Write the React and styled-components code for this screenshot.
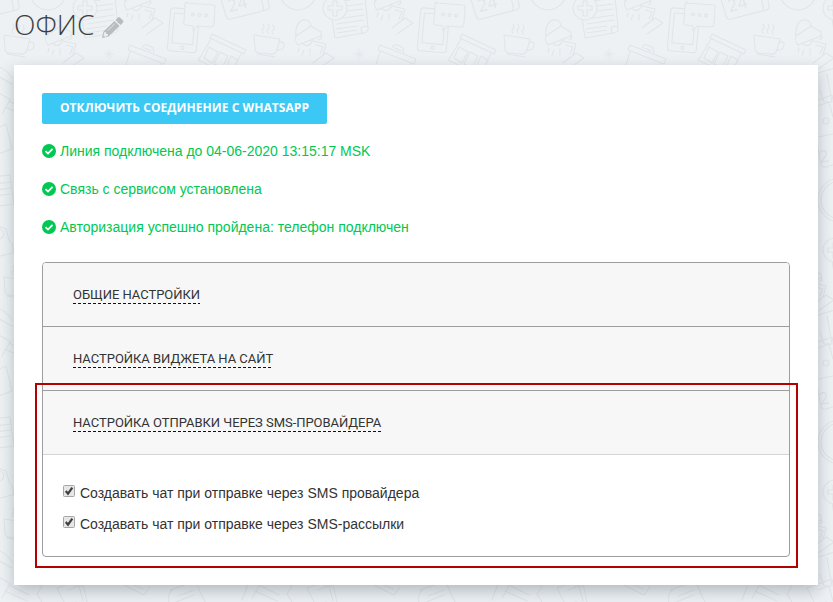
import React from "react";
import styled, { createGlobalStyle } from "styled-components";

const GlobalStyle = createGlobalStyle`
  * { box-sizing: border-box; }
  body { margin: 0; background: #edf1f4; overflow: hidden; }
`;

const Page = styled.div`
  position: relative;
  width: 833px;
  height: 602px;
  overflow: hidden;
  padding: 0 15px 0 14px;
  font-family: "Liberation Sans", Arial, sans-serif;
`;

const Backdrop = styled.svg`
  position: absolute;
  inset: 0;
  width: 100%;
  height: 100%;
`;

const Header = styled.header`
  position: relative;
  display: flex;
  align-items: flex-start;
  height: 65px;
  padding-top: 4px;
`;

const Title = styled.h1`
  margin: 0;
  font: 300 28px/40px "Open Sans", sans-serif;
  color: #3c3f42;
`;

const Pencil = styled.svg`
  width: 22px;
  height: 22px;
  margin: 12px 0 0 8px;
  fill: #b9bbbc;
`;

const Card = styled.main`
  position: relative;
  height: 520px;
  padding: 28px;
  background: #fff;
  box-shadow: 0 6px 14px rgba(60, 75, 85, 0.32);
`;

const Button = styled.button`
  display: block;
  width: 285px;
  height: 31px;
  padding: 0 0 2px;
  border: 0;
  border-radius: 2px;
  background: #3bc8f5;
  color: #fff;
  font: 700 12px/28px "Open Sans", sans-serif;
  letter-spacing: 0.06px;
  text-align: center;
  white-space: nowrap;
`;

const StatusList = styled.div`
  display: grid;
  grid-auto-rows: 38px;
  margin-top: 8px;
`;

const Status = styled.div`
  display: flex;
  align-items: center;
  gap: 4px;
  color: #00c853;
  font-size: 14px;
  white-space: nowrap;
`;

const StatusIcon = styled.svg`
  width: 14px;
  height: 14px;
  flex: none;
`;

const Accordion = styled.section`
  margin-top: 16px;
  height: 295px;
  border: 1px solid #9d9d9d;
  border-radius: 4px;
  overflow: hidden;
`;

const SectionHead = styled.div`
  display: flex;
  align-items: flex-start;
  height: 64px;
  padding: 24px 30px 0;
  background: #f7f7f7;
  border-bottom: 1px solid ${(p) => (p.$open ? "#d5d5d5" : "#9d9d9d")};
`;

const SectionLink = styled.span`
  display: block;
  height: 17px;
  font: 400 13px/16px Roboto, sans-serif;
  letter-spacing: -0.03px;
  color: #333;
  white-space: nowrap;
  background: repeating-linear-gradient(90deg, #111 0 3px, transparent 3px 5px) 0 100% / 100% 1px no-repeat;
`;

const Options = styled.div`
  display: grid;
  grid-auto-rows: 31px;
  padding: 22px 20px;
`;

const Option = styled.label`
  display: flex;
  align-items: center;
  gap: 5px;
  font-size: 14px;
  color: #333;
  white-space: nowrap;
`;

const CheckBox = styled.svg`
  width: 12px;
  height: 12px;
  margin-top: -4px;
  flex: none;
`;

const Highlight = styled.div`
  position: absolute;
  left: 21px;
  top: 318px;
  width: 763px;
  height: 185px;
  border: 2px solid #b30000;
`;

function Lamp() {
  return (
    <path d="M1 17C0 9 3 0 11 1c3 0 5 4 5 6l10 6v4L3 26C1 24 0 20 1 17l15-10M8 24c2 5 10 2 9-4M26 15l1 4-3 2M18 22l13 3-3 11M21 26l7 2-3 7M18 44l13-10 8 5-16 11M4 29l-1 4M9 31l-2 5M15 30v6" />
  );
}

function Doodles() {
  return (
    <Backdrop aria-hidden="true">
      <defs>
        <g id="doodle" fill="none" stroke="#e1e5e8" strokeWidth="1.1" strokeLinecap="round" strokeLinejoin="round">
          <g transform="rotate(5 186 30)">
            <rect x="169" y="9" width="29" height="43" rx="3" />
            <path d="M173 14h21v30h-21z" />
            <circle cx="184" cy="48" r="1.6" />
          </g>
          <path fill="#edf1f4" d="M187 3l26 2q3 0 2 4l-1 15q0 3-4 3l-13-1-4 5v-5l-7-1q-3 0-2-4l1-16q0-3 2-3z" />
          <circle cx="193" cy="14.500" r="1.400" />
          <circle cx="199.500" cy="15" r="1.400" />
          <circle cx="206" cy="15.500" r="1.400" />
          <path d="M220-4l6 20q1 4 5 3l35-9q4-1 3-5l-4-17M231 19l31-8q2-1 1-5l-3-13" />
          <path d="M4 35l26 4-3 11q-2 5-7 4l-11-1q-4 0-4-5zM29 42q6-1 5 4-1 5-8 4M7 54l18 3M13 33q-2-3 0-4t0-5M18 33q-2-3 0-4t0-5M23 34q-2-3 0-4t0-5" />
          <g transform="translate(45 19)"><Lamp /></g>
          <g transform="translate(124 -16)"><Lamp /></g>
          <path d="M95 1l20-4 3 30q1 6-5 6l-28 5-3-20M118 27q-4-2-7 1l1 6M97 6l16-2M97 11l16-2M87 19l27-4M87 24l27-4M86 29l21-3M87 33l20-3" />
          <circle cx="85" cy="8" r="12" fill="#edf1f4" />
          <path d="M83 1h4v5h5v4h-5v6h-4v-6h-5V6h5z" />
          <path d="M109 49v10M104 54h10M106 51l6 6M112 51l-6 6" strokeWidth=".8" />
          <path d="M130 45l36 14-2 5-36-14zM130 52l-8 25 31 12 8-26M142 48l2-3q4-1 9 3l1 5M145 48l6 3" />
          <path d="M212 34l34 16-2 4-34-16zM211 39l-10 17M241 54l-12 22M201 56l-3 4 32 15M209 47l9 5-6 11-8-5zM220 52l8 4-6 12-8-4zM231 56l7 4-7 13-6-3z" />
          <circle cx="48" cy="-8" r="18" />
          <path d="M48-8l7 7 2-2" />
          <path d="M0 67q8 4 12 11M-4 75l16 9M-3 92l14 8M-7 130l13-6 6 25-19 7M-8 177l18-2 4 29-22 3M-5 184l16-2M-5 190l16-2M-5 196l15-2M-5 225l11 4 7 24M0 229a5 5 0 1 1-3 10" />
          <path d="M68 73l17-5M70 90l4 12h8l-5-28M68 137l20-4M67 143l4 22q1 3 5 2l13-4" />
          <circle cx="76" cy="121" r="3" />
          <circle cx="90" cy="200" r="22" />
          <circle cx="90" cy="200" r="19" />
          <path d="M10 100l-8 14M248 100l-6 16M9 101l20 10M5 107l22 10M36 99l6 3-5 8 6 10M57 104l10 20M57 104l25-9 6 28M68 106l11-4 4 15M120 99l24 12 6-8M129 99l14 6M170 106l25-9 11 23M178 112l16-6M176 118l18-7M178 103q-12 4-9 16" />
          <g transform="rotate(-15 237 5)" stroke="none" fill="#e1e5e8">
            <text x="228" y="10" fontFamily="Open Sans, sans-serif" fontSize="17">24</text>
          </g>
          <text x="69" y="162" transform="rotate(-10 75 155)" stroke="none" fill="#e1e5e8" fontFamily="Open Sans, sans-serif" fontSize="17">2</text>
        </g>
        <pattern id="tile" width="250" height="242" patternUnits="userSpaceOnUse">
          <use href="#doodle" />
          <use href="#doodle" x="-250" />
          <use href="#doodle" x="250" />
          <use href="#doodle" y="242" />
        </pattern>
      </defs>
      <rect width="833" height="602" fill="url(#tile)" />
    </Backdrop>
  );
}

const statuses = [
  "Линия подключена до 04-06-2020 13:15:17 MSK",
  "Связь с сервисом установлена",
  "Авторизация успешно пройдена: телефон подключен",
];

const sections = [
  { title: "ОБЩИЕ НАСТРОЙКИ" },
  { title: "НАСТРОЙКА ВИДЖЕТА НА САЙТ" },
  { title: "НАСТРОЙКА ОТПРАВКИ ЧЕРЕЗ SMS-ПРОВАЙДЕРА", open: true },
];

const options = [
  "Создавать чат при отправке через SMS провайдера",
  "Создавать чат при отправке через SMS-рассылки",
];

export default function App() {
  return (
    <>
      <GlobalStyle />
      <Page>
        <Doodles />
        <Header>
          <Title>ОФИС</Title>
          <Pencil viewBox="0 0 22 22">
            <path d="M16 1.500q1-1 2 0l3 3q1 1 0 2l-2.500 2.500-5-5zM12.500 5l5 5L6.500 20.500 0 22l1.500-6.500z" />
            <path d="M3 16l1 2 2 1-3 1.500-1-1zM6 14.500l7-7" fill="#edf1f4" stroke="#edf1f4" strokeWidth=".8" />
          </Pencil>
        </Header>
        <Card>
          <Button>ОТКЛЮЧИТЬ СОЕДИНЕНИЕ С WHATSAPP</Button>
          <StatusList>
            {statuses.map((s) => (
              <Status key={s}>
                <StatusIcon viewBox="0 0 14 14">
                  <circle cx="7" cy="7" r="7" fill="#00c853" />
                  <path d="M3.500 7.200l2.500 2.400 4.600-4.700" fill="none" stroke="#fff" strokeWidth="1.800" />
                </StatusIcon>
                {s}
              </Status>
            ))}
          </StatusList>
          <Accordion>
            {sections.map((s) => (
              <SectionHead key={s.title} $open={s.open}>
                <SectionLink>{s.title}</SectionLink>
              </SectionHead>
            ))}
            <Options>
              {options.map((o) => (
                <Option key={o}>
                  <CheckBox viewBox="0 0 12 12">
                    <rect x=".5" y=".5" width="11" height="11" rx="1" fill="#e6e6e6" stroke="#a6a6a6" />
                    <path d="M2.800 6l2.200 2.600 4.300-6" fill="none" stroke="#404040" strokeWidth="2.200" />
                  </CheckBox>
                  {o}
                </Option>
              ))}
            </Options>
          </Accordion>
          <Highlight />
        </Card>
      </Page>
    </>
  );
}
